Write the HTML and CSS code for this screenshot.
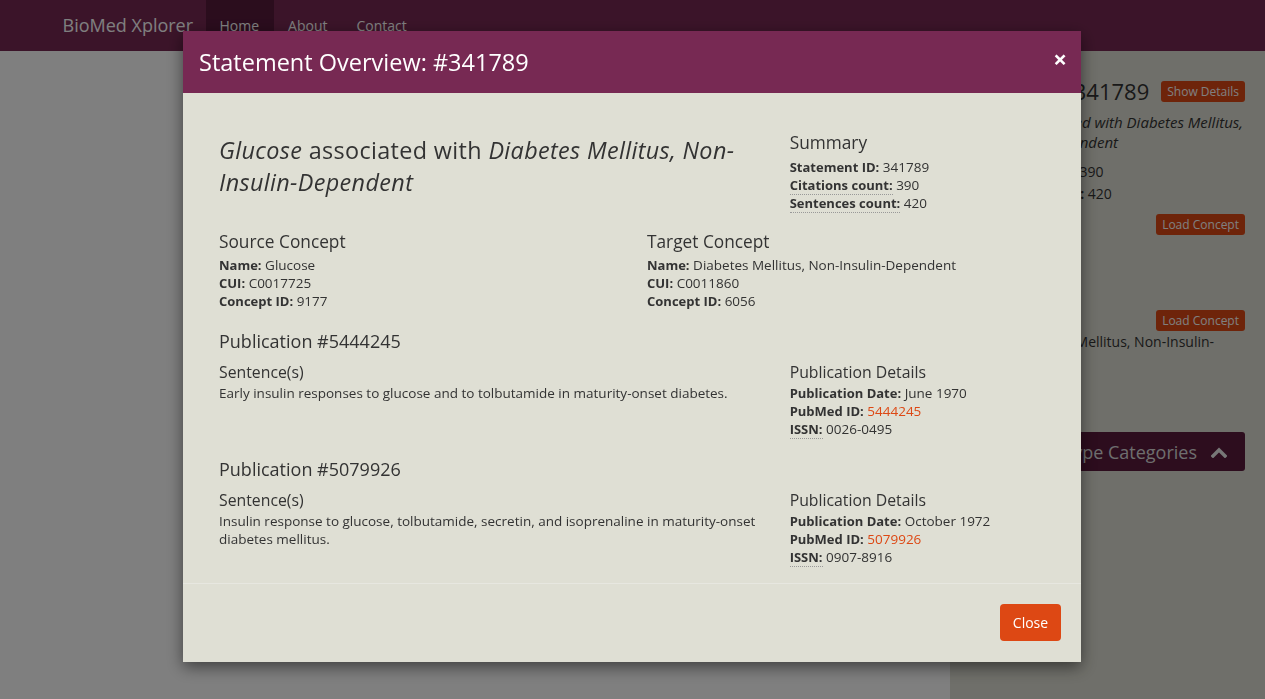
FILE: index.html
```html
<!DOCTYPE html>
<html lang="en">
<head>
<meta charset="utf-8">
<title>BioMed Xplorer</title>
<link rel="stylesheet" href="styles.css">
</head>
<body>
<header class="navbar">
  <div class="nav-container">
    <a class="brand" href="#">BioMed Xplorer</a>
    <nav class="nav-links">
      <a class="nav-link active" href="#">Home</a>
      <a class="nav-link" href="#">About</a>
      <a class="nav-link" href="#">Contact</a>
    </nav>
  </div>
</header>

<main class="page">
  <section class="main-area"></section>
  <aside class="sidebar">
    <div class="side-head">
      <h3 class="side-title">Statement #341789</h3>
      <button class="btn-xs">Show Details</button>
    </div>
    <p class="side-statement"><em>Glucose associated with Diabetes Mellitus, </em><em>Non-Insulin-Dependent</em></p>
    <p class="side-count first"><strong>Citations count:</strong> 390</p>
    <p class="side-count"><strong>Sentences count:</strong> 420</p>
    <div class="side-concept one">
      <div class="side-concept-head"><h4 class="side-sub">Source</h4><button class="btn-xs">Load Concept</button></div>
      <p class="side-concept-name"><strong>Name:</strong> Glucose</p>
    </div>
    <div class="side-concept two">
      <div class="side-concept-head"><h4 class="side-sub">Target</h4><button class="btn-xs">Load Concept</button></div>
      <p class="side-concept-name"><strong>Name:</strong> <span>Diabetes Mellitus, Non-Insulin-</span><span>Dependent</span></p>
    </div>
    <div class="side-box">
      <span>Semantic Type Categories</span>
      <svg class="chev" width="16" height="12" viewBox="0 0 16 12"><path d="M2 10 L8 4 L14 10" fill="none" stroke="currentColor" stroke-width="3.4" stroke-linecap="square"/></svg>
    </div>
  </aside>
</main>

<div class="backdrop"></div>

<div class="modal-layer">
  <div class="modal">
    <div class="modal-header">
      <h2 class="modal-title">Statement Overview: #341789</h2>
      <button class="close" aria-label="Close">&times;</button>
    </div>
    <div class="modal-body">
      <div class="row row-top">
        <div class="col">
          <h3 class="statement"><em>Glucose</em> associated with <em>Diabetes Mellitus, Non-</em><em>Insulin-Dependent</em></h3>
        </div>
        <div class="col">
          <h4 class="h-md summary-h">Summary</h4>
          <div class="kv"><strong>Statement ID:</strong> 341789</div>
          <div class="kv"><abbr title="Number of citations"><strong>Citations count:</strong></abbr> 390</div>
          <div class="kv"><abbr title="Number of sentences"><strong>Sentences count:</strong></abbr> 420</div>
        </div>
      </div>
      <div class="row row-concepts">
        <div class="col">
          <h4 class="h-md">Source Concept</h4>
          <div class="kv"><strong>Name:</strong> Glucose</div>
          <div class="kv"><strong>CUI:</strong> C0017725</div>
          <div class="kv"><strong>Concept ID:</strong> 9177</div>
        </div>
        <div class="col">
          <h4 class="h-md">Target Concept</h4>
          <div class="kv"><strong>Name:</strong> Diabetes Mellitus, Non-Insulin-Dependent</div>
          <div class="kv"><strong>CUI:</strong> C0011860</div>
          <div class="kv"><strong>Concept ID:</strong> 6056</div>
        </div>
      </div>

      <div class="publication">
        <h3 class="pub-title">Publication #5444245</h3>
        <div class="row row-pub">
          <div class="col">
            <h5 class="h-sm">Sentence(s)</h5>
            <div class="kv">Early insulin responses to glucose and to tolbutamide in maturity-onset diabetes.</div>
          </div>
          <div class="col">
            <h5 class="h-sm">Publication Details</h5>
            <div class="kv"><strong>Publication Date:</strong> June 1970</div>
            <div class="kv"><strong>PubMed ID:</strong> <a href="#">5444245</a></div>
            <div class="kv"><abbr title="International Standard Serial Number"><strong>ISSN:</strong></abbr> 0026-0495</div>
          </div>
        </div>
      </div>

      <div class="publication">
        <h3 class="pub-title">Publication #5079926</h3>
        <div class="row row-pub">
          <div class="col">
            <h5 class="h-sm">Sentence(s)</h5>
            <div class="kv">Insulin response to glucose, tolbutamide, secretin, and isoprenaline in maturity-onset diabetes mellitus.</div>
          </div>
          <div class="col">
            <h5 class="h-sm">Publication Details</h5>
            <div class="kv"><strong>Publication Date:</strong> October 1972</div>
            <div class="kv"><strong>PubMed ID:</strong> <a href="#">5079926</a></div>
            <div class="kv"><abbr title="International Standard Serial Number"><strong>ISSN:</strong></abbr> 0907-8916</div>
          </div>
        </div>
      </div>
    </div>
    <div class="modal-footer">
      <button class="btn-close">Close</button>
    </div>
  </div>
</div>
</body>
</html>
```

FILE: styles.css
```css
* { box-sizing: border-box; }
html, body { margin: 0; padding: 0; height: 100%; }
body {
  font-family: "Open Sans", "Noto Sans", sans-serif;
  font-size: 13.5px;
  line-height: 18px;
  color: #333;
  background: #fff;
  overflow: hidden;
}
h1, h2, h3, h4, h5, p { margin: 0; font-weight: normal; }
button { font-family: inherit; border: 0; cursor: pointer; }
strong { font-weight: bold; font-size: 13px; }

/* navbar */
.navbar {
  height: 51px;
  background: #772953;
}
.nav-container {
  width: 1170px;
  margin: 0 auto;
  padding: 0 15px;
  display: flex;
  height: 51px;
}
.brand {
  color: #fff;
  text-decoration: none;
  font-size: 18px;
  line-height: 51px;
  width: 143px;
  white-space: nowrap;
}
.nav-links { display: flex; }
.nav-link {
  color: #fff;
  text-decoration: none;
  font-size: 14px;
  line-height: 51px;
  padding: 0 15px 0 14px;
}
.nav-link.active { background: #561a3b; }

/* page */
.page {
  display: flex;
  height: calc(100% - 51px);
}
.main-area { flex: 0 0 950px; background: #fff; }
.sidebar {
  flex: 1 1 0;
  min-width: 0;
  background: #dfdfd4;
  padding: 27px 20px 0 15px;
}
.side-head {
  display: flex;
  justify-content: flex-end;
  align-items: center;
  gap: 12px;
  height: 26px;
}
.side-title { font-size: 22px; line-height: 26px; white-space: nowrap; flex-shrink: 0; }
.btn-xs {
  background: #dd4814;
  color: #fff;
  font-size: 12px;
  line-height: 21px;
  height: 21px;
  padding: 0 6px;
  border-radius: 3px;
  white-space: nowrap;
  flex-shrink: 0;
}
.side-statement { margin-top: 8px; font-size: 15px; line-height: 20px; }
.side-count { font-size: 14px; line-height: 20px; margin-top: 2px; }
.side-count.first { margin-top: 10px; }
.side-count strong, .side-concept-name strong { font-size: 14px; }
.side-concept { margin-top: 10px; }
.side-concept.two { margin-top: 54px; }
.side-concept-head { display: flex; justify-content: space-between; align-items: center; height: 21px; }
.side-sub { font-size: 14px; line-height: 18px; }
.side-concept-name { font-size: 14px; line-height: 20px; margin-top: 1px; }
.side-box {
  margin-top: 60px;
  height: 39px;
  background: #5a1a3c;
  color: #ddd;
  font-size: 18px;
  border-radius: 3px;
  display: flex;
  align-items: center;
  justify-content: flex-end;
  gap: 14px;
  padding-right: 18px;
  white-space: nowrap;
}
.chev { color: #eee; flex-shrink: 0; }

/* backdrop + modal */
.backdrop {
  position: fixed;
  inset: 0;
  background: rgba(0,0,0,0.5);
}
.modal-layer {
  position: fixed;
  inset: 0;
  display: flex;
  justify-content: center;
  align-items: flex-start;
  padding: 31px 1px 0 0;
}
.modal {
  width: 898px;
  background: #dfdfd4;
  box-shadow: 0 5px 15px rgba(0,0,0,0.5);
}
.modal-header {
  background: #772953;
  height: 62px;
  padding: 15px 14px 15px 16px;
  display: flex;
  justify-content: space-between;
  align-items: center;
}
.modal-title {
  color: #fff;
  font-size: 23.5px;
  line-height: 32px;
}
.close {
  background: none;
  color: #fff;
  font-size: 24px;
  font-weight: bold;
  line-height: 20px;
  padding: 0;
  margin-top: -6px;
}

.modal-body { padding: 20px 21px 17px; }
.row { display: grid; }
.row-top, .row-pub { grid-template-columns: 2fr 1fr; }
.row-concepts { grid-template-columns: 1fr 1fr; margin-top: 20px; }
.col { padding: 0 15px; }
.statement {
  margin-top: 21px;
  font-size: 23.4px;
  letter-spacing: 0.35px;
  line-height: 32px;
  color: #333;
}
.summary-h { margin-top: 20px; }
.h-md { font-size: 17.3px; line-height: 20px; margin-bottom: 4px; }
.summary-h { margin-bottom: 5px; }
.h-sm { font-size: 15.8px; line-height: 20px; margin-bottom: 2px; }
.kv { line-height: 18px; }
abbr { text-decoration: none; border-bottom: 1px dotted #999; }
a { color: #dd4814; text-decoration: none; }
.publication { margin-top: 19px; padding: 0 15px; }
.publication .row-pub { margin: 0 -15px; }
.pub-title { font-size: 18px; line-height: 24px; margin-bottom: 9px; }

.modal-footer {
  border-top: 1px solid #e7e7e0;
  padding: 20px 20px 21px;
  display: flex;
  justify-content: flex-end;
}
.btn-close {
  background: #dd4814;
  color: #fff;
  font-size: 14px;
  height: 37px;
  width: 61px;
  border-radius: 4px;
}
```
